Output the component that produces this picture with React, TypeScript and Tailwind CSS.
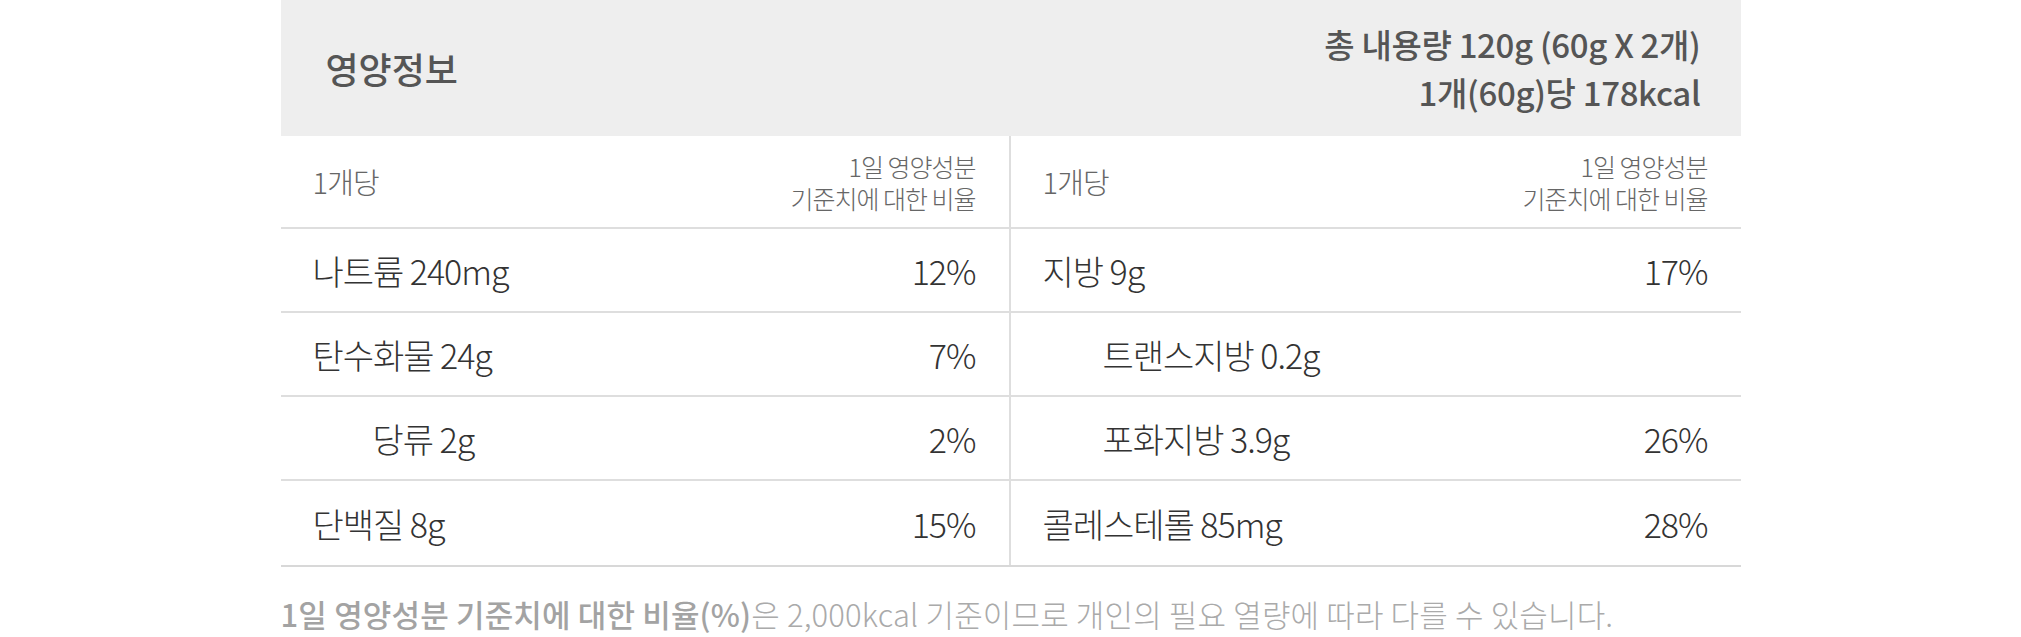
const left = [
  { name: "나트륨 240mg", pct: "12%", sub: false },
  { name: "탄수화물 24g", pct: "7%", sub: false },
  { name: "당류 2g", pct: "2%", sub: true },
  { name: "단백질 8g", pct: "15%", sub: false },
];

const right = [
  { name: "지방 9g", pct: "17%", sub: false },
  { name: "트랜스지방 0.2g", pct: "", sub: true },
  { name: "포화지방 3.9g", pct: "26%", sub: true },
  { name: "콜레스테롤 85mg", pct: "28%", sub: false },
];

type Row = { name: string; pct: string; sub: boolean };

function Column({ rows, divider }: { rows: Row[]; divider?: boolean }) {
  return (
    <div className={divider ? "border-r-2 border-[#dedede]" : ""}>
      <div className="flex h-[93px] items-center justify-between border-b-2 border-[#dedede] pl-[32px] pr-[33px]">
        <span className="text-[29px] font-light tracking-[-0.03em] text-[#666]">1개당</span>
        <span className="text-right text-[25px] leading-[32px] font-light tracking-[-0.04em] text-[#666]">
          1일 영양성분
          <br />
          기준치에 대한 비율
        </span>
      </div>
      {rows.map((r, i) => (
        <div
          key={r.name}
          className={
            "flex h-[84px] items-center justify-between pl-[32px] pr-[33px] " +
            (i < rows.length - 1 ? "border-b-2 border-[#dedede]" : "")
          }
        >
          <span
            className={
              "text-[34px] font-light tracking-[-0.03em] text-[#333] " + (r.sub ? "pl-[60px]" : "")
            }
          >
            {r.name}
          </span>
          <span className="text-[34px] font-light tracking-[-0.03em] text-[#333]">{r.pct}</span>
        </div>
      ))}
    </div>
  );
}

export default function App() {
  return (
    <div className="min-h-[637px] w-full bg-white font-['Noto_Sans_CJK_KR',sans-serif]">
      <div className="mx-auto w-[1460px]">
        <div className="flex h-[136px] items-center justify-between bg-[#eeeeee] pl-[45px] pr-[40px]">
          <h2 className="text-[36px] font-medium text-[#555]">영양정보</h2>
          <div className="text-right text-[33px] leading-[48px] font-medium tracking-[-0.01em] text-[#555]">
            <p>총 내용량 120g (60g X 2개)</p>
            <p>1개(60g)당 178kcal</p>
          </div>
        </div>

        <div className="grid grid-cols-2 border-b-2 border-[#d8d8d8]">
          <Column rows={left} divider />
          <Column rows={right} />
        </div>

        <p className="mt-[26px] text-[31px] leading-[42px] tracking-[0.005em] text-[#aaa] font-light">
          <span className="font-medium text-[#a3a3a3]">1일 영양성분 기준치에 대한 비율(%)</span>
          은 2,000kcal 기준이므로 개인의 필요 열량에 따라 다를 수 있습니다.
        </p>
      </div>
    </div>
  );
}
